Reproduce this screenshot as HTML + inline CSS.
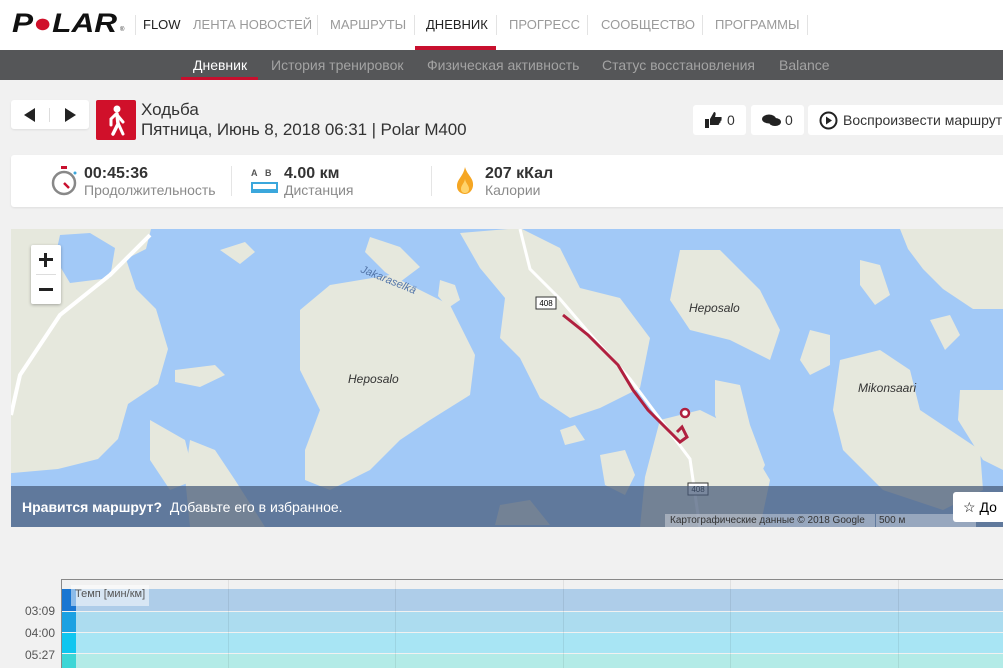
<!DOCTYPE html>
<html><head><meta charset="utf-8"><style>
*{margin:0;padding:0;box-sizing:border-box}
body{width:1003px;height:668px;overflow:hidden;background:#f1f1f1;font-family:"Liberation Sans",sans-serif;position:relative}
.abs{position:absolute}
.top{left:0;top:0;width:1003px;height:50px;background:#fff}
.nav a{position:absolute;top:17px;font-size:13px;color:#9a9a9a;text-decoration:none}
.sep{position:absolute;top:15px;width:1px;height:20px;background:#e3e3e3}
.sub{left:0;top:50px;width:1003px;height:30px;background:#555658}
.sub span{position:absolute;top:7px;font-size:14px;color:#a3a3a3}
.card{background:#fff;border-radius:3px;box-shadow:0 1px 2px rgba(0,0,0,.08)}
.btn{position:absolute;top:105px;height:30px;background:#fff;border-radius:3px;font-size:14px;color:#333;line-height:30px}
.lbl{font-size:14px;color:#8a8a8a}
.val{font-size:16px;font-weight:bold;color:#333}
</style></head><body>
<div class="abs top">
 <div class="abs" style="left:12px;top:8px;font-size:27px;font-weight:900;font-style:italic;letter-spacing:0;color:#111;transform:scaleX(1.17);transform-origin:left">P<span style="color:#d0102a">●</span>LAR</div>
 <div class="abs" style="left:120px;top:27px;font-size:6px;color:#333">®</div>
 <div class="sep" style="left:135px"></div>
 <div class="nav">
  <a style="left:143px;color:#222">FLOW</a>
  <a style="left:193px">ЛЕНТА НОВОСТЕЙ</a>
  <div class="sep" style="left:317px"></div>
  <a style="left:330px">МАРШРУТЫ</a>
  <div class="sep" style="left:414px"></div>
  <a style="left:426px;color:#222">ДНЕВНИК</a>
  <div class="sep" style="left:496px"></div>
  <a style="left:509px">ПРОГРЕСС</a>
  <div class="sep" style="left:587px"></div>
  <a style="left:601px">СООБЩЕСТВО</a>
  <div class="sep" style="left:702px"></div>
  <a style="left:715px">ПРОГРАММЫ</a>
  <div class="sep" style="left:807px"></div>
 </div>
 <div class="abs" style="left:415px;top:46px;width:81px;height:4px;background:#c8102e"></div>
</div>
<div class="abs sub">
 <span style="left:193px;color:#fff">Дневник</span>
 <div class="abs" style="left:181px;top:27px;width:77px;height:3px;background:#c8102e"></div>
 <span style="left:271px">История тренировок</span>
 <span style="left:427px">Физическая активность</span>
 <span style="left:602px">Статус восстановления</span>
 <span style="left:779px">Balance</span>
</div>
<div class="abs card" style="left:11px;top:100px;width:78px;height:29px"></div>
<div class="abs" style="left:24px;top:108px;width:0;height:0;border-top:7px solid transparent;border-bottom:7px solid transparent;border-right:11px solid #222"></div>
<div class="abs" style="left:49px;top:108px;width:1px;height:14px;background:#ddd"></div>
<div class="abs" style="left:65px;top:108px;width:0;height:0;border-top:7px solid transparent;border-bottom:7px solid transparent;border-left:11px solid #222"></div>
<div class="abs" style="left:96px;top:100px;width:40px;height:40px;background:#d0102a;border-radius:2px">
 <svg width="40" height="40" viewBox="0 0 40 40"><circle cx="21" cy="9" r="3.5" fill="#fff"/><path d="M20 14l-5 5v6" stroke="#fff" stroke-width="3" fill="none" stroke-linecap="round"/><path d="M21 14l1 10-5 10" stroke="#fff" stroke-width="3.5" fill="none" stroke-linecap="round"/><path d="M22 23l5 11M22 16l5 6" stroke="#fff" stroke-width="3" fill="none" stroke-linecap="round"/></svg>
</div>
<div class="abs" style="left:141px;top:100px;font-size:17px;color:#333">Ходьба</div>
<div class="abs" style="left:141px;top:120px;font-size:17px;color:#333;letter-spacing:-0.1px">Пятница, Июнь 8, 2018 06:31 | Polar M400</div>
<div class="btn" style="left:693px;width:53px"><svg class="abs" style="left:11px;top:7px" width="18" height="16" viewBox="0 0 18 16"><path d="M1 7h4v9H1zM6 7l4-7c2 0 2 2 1 5h6c1 0 1 2 0 2 1 0 1 2-1 2 1 0 1 2-1 2 1 0 0 2-1 2H6z" fill="#222"/></svg><span class="abs" style="left:34px">0</span></div>
<div class="btn" style="left:751px;width:53px"><svg class="abs" style="left:11px;top:9px" width="20" height="13" viewBox="0 0 20 13"><ellipse cx="7" cy="5" rx="7" ry="4.5" fill="#222"/><ellipse cx="13" cy="8" rx="6" ry="4" fill="#222"/></svg><span class="abs" style="left:34px">0</span></div>
<div class="btn" style="left:808px;width:210px"><svg class="abs" style="left:11px;top:6px" width="19" height="19" viewBox="0 0 19 19"><circle cx="9.5" cy="9.5" r="8" stroke="#222" stroke-width="2" fill="none"/><path d="M7 5.5l6 4-6 4z" fill="#222"/></svg><span class="abs" style="left:35px">Воспроизвести маршрут</span></div>
<div class="abs card" style="left:11px;top:155px;width:1000px;height:52px"></div>
<svg class="abs" style="left:50px;top:165px" width="30" height="32" viewBox="0 0 30 32"><rect x="11" y="1" width="6" height="3" fill="#c8102e"/><circle cx="14" cy="18" r="11" stroke="#888" stroke-width="2.5" fill="#fff"/><path d="M14 18l5 5" stroke="#c8102e" stroke-width="2.5"/><circle cx="25" cy="8" r="1.5" fill="#3ba7dc"/></svg>
<div class="abs val" style="left:84px;top:165px">00:45:36</div>
<div class="abs lbl" style="left:84px;top:182px">Продолжительность</div>
<div class="abs" style="left:231px;top:166px;width:1px;height:30px;background:#e5e5e5"></div>
<div class="abs" style="left:251px;top:168px;font-size:9px;font-weight:bold;color:#555">A&nbsp;&nbsp;&nbsp;B</div>
<div class="abs" style="left:251px;top:182px;width:27px;height:11px;background:#3ba7dc"><div style="margin:2px 2px;height:5px;background:#fff"></div></div>
<div class="abs val" style="left:284px;top:165px">4.00 км</div>
<div class="abs lbl" style="left:284px;top:182px">Дистанция</div>
<div class="abs" style="left:431px;top:166px;width:1px;height:30px;background:#e5e5e5"></div>
<svg class="abs" style="left:455px;top:167px" width="20" height="28" viewBox="0 0 20 28"><path d="M10 0C12 8 19 11 18 19c-1 6-5 8-8 8s-8-2-8-8C2 12 8 10 10 0z" fill="#f5a623"/><path d="M10 12c1 5 4 6 4 10 0 3-2 4-4 4s-4-1-4-4c0-4 3-5 4-10z" fill="#ffd36b"/></svg>
<div class="abs val" style="left:485px;top:165px">207 кКал</div>
<div class="abs lbl" style="left:485px;top:182px">Калории</div>
<svg class="abs" style="left:11px;top:229px" width="992" height="298" viewBox="11 229 992 298">
<rect x="11" y="229" width="992" height="298" fill="#a2c9f7"/>
<g fill="#e6e8dd">
<path d="M11 229h140l-5 20-20 10 10 30 20 20 12 40 -10 35-30 20-10 35-20 20-40 10-57 5z"/>
<path d="M60 235l30-2 25 15-5 30-40 5-15-25z" fill="#a2c9f7"/>
<path d="M175 370l40-5 10 10-25 12-25-5z"/>
<path d="M150 420l35 20 10 40-25 10-20-30z"/>
<path d="M190 440l25 10 20 30 30 47h-75l-5-50z"/>
<path d="M220 250l25-8 10 10-15 12z"/>
<path d="M300 310l30-25 60-10 60 30 25 50-5 40-40 25-30 20-30 30-40 20-25-10 0-30 15-40-20-40z"/>
<path d="M370 237l30 10 20 20-20 15-15-10-20-20z"/>
<path d="M440 280l15 5 5 15-12 8-10-12z"/>
<path d="M460 233l60-5 40 20 20 40 40 10 30 40-10 50-40 20-30 10-30-20-20-40-20-20 5-40-25-30z"/>
<path d="M660 420l40-10 40 20 30 50-10 47h-120l5-50z"/>
<path d="M680 250l40 0 40 40 20 40-10 30-40-20-40-10-20-30z"/>
<path d="M715 380l25 5 10 40 15 40-10 20-25-30-15-40z"/>
<path d="M840 360l40-10 30 20 10 40 30 20 30 20 3 40-40 20-60-20-40-40-10-40z"/>
<path d="M900 229l103 0 0 80-30 0-30-20-20-20-15-20z"/>
<path d="M930 320l20-5 10 20-15 15z"/>
<path d="M810 330l20 5 0 30-20 10-10-15z"/>
<path d="M860 260l20 5 10 30-15 10-15-20z"/>
<path d="M960 390l43 0 0 80-20-10-25-40z"/>
<path d="M560 430l15-5 10 15-20 5z"/>
<path d="M600 455l25-5 10 25-10 20-20-10z"/>
<path d="M500 505l30-5 20 25h-55z"/>
</g>
<path d="M150 235l-40 40-50 40-40 60-9 40" stroke="#fff" stroke-width="4" fill="none"/>
<path d="M520 229l10 40 30 30 30 35 40 45 30 40 30 40 10 70" stroke="#fff" stroke-width="3" fill="none"/>
<path d="M563 315l25 20 30 30 15 25 15 20 20 20 12 12 7-5-5-10-5 5" stroke="#b0203f" stroke-width="3" fill="none"/>
<circle cx="685" cy="413" r="4" fill="#fff" stroke="#b0203f" stroke-width="2.5"/>
<rect x="536" y="297" width="20" height="12" fill="#fff" stroke="#333"/>
<text x="546" y="306" font-size="8" text-anchor="middle" font-family="Liberation Sans">408</text>
<rect x="688" y="483" width="20" height="12" fill="#fff" stroke="#333"/>
<text x="698" y="492" font-size="8" text-anchor="middle" font-family="Liberation Sans">408</text>
<g font-family="Liberation Sans" font-style="italic" font-size="12" fill="#333">
<text x="348" y="383">Heposalo</text><text x="689" y="312">Heposalo</text><text x="858" y="392">Mikonsaari</text>
<text x="360" y="272" fill="#5577aa" font-size="11" transform="rotate(22 360 272)">Jakaraselkä</text>
</g>
</svg>
<div class="abs" style="left:31px;top:245px;width:30px;height:59px;background:#fff;border-radius:2px;box-shadow:0 1px 3px rgba(0,0,0,.3)">
 <div class="abs" style="left:8px;top:13px;width:14px;height:3px;background:#222"></div>
 <div class="abs" style="left:13px;top:8px;width:3px;height:14px;background:#222"></div>
 <div class="abs" style="left:5px;top:29px;width:20px;height:1px;background:#ddd"></div>
 <div class="abs" style="left:8px;top:43px;width:14px;height:3px;background:#222"></div>
</div>
<div class="abs" style="left:11px;top:486px;width:992px;height:41px;background:rgba(70,90,120,.72)"></div>
<div class="abs" style="left:22px;top:499px;font-size:14px;color:#fff"><b>Нравится маршрут?</b>&nbsp; Добавьте его в избранное.</div>
<div class="abs" style="left:665px;top:514px;width:210px;height:13px;background:rgba(255,255,255,.35);font-size:10px;color:#333;padding-left:5px;line-height:13px">Картографические данные © 2018 Google</div>
<div class="abs" style="left:876px;top:514px;width:100px;height:13px;background:rgba(255,255,255,.35);font-size:10px;color:#333;padding-left:3px;line-height:13px">500 м</div>
<div class="abs" style="left:953px;top:492px;width:60px;height:30px;background:#fff;border-radius:3px;font-size:14px;line-height:30px;padding-left:10px">☆ До</div>
<div class="abs" style="left:61px;top:579px;width:942px;height:89px;border-top:1px solid #888;border-left:1px solid #888"></div>
<div class="abs" style="left:62px;top:589px;width:941px;height:22px;background:#aecde9"></div>
<div class="abs" style="left:62px;top:612px;width:941px;height:20px;background:#acdcef"></div>
<div class="abs" style="left:62px;top:633px;width:941px;height:20px;background:#a8e5f4"></div>
<div class="abs" style="left:62px;top:654px;width:941px;height:14px;background:#b3ebe7"></div>
<div class="abs" style="left:62px;top:589px;width:14px;height:22px;background:#1976d2"></div>
<div class="abs" style="left:62px;top:612px;width:14px;height:20px;background:#1ba1e2"></div>
<div class="abs" style="left:62px;top:633px;width:14px;height:20px;background:#0fc6f0"></div>
<div class="abs" style="left:62px;top:654px;width:14px;height:14px;background:#3cd6d6"></div>
<div class="abs" style="left:228px;top:580px;width:1px;height:88px;background:rgba(0,0,0,.07)"></div>
<div class="abs" style="left:395px;top:580px;width:1px;height:88px;background:rgba(0,0,0,.07)"></div>
<div class="abs" style="left:563px;top:580px;width:1px;height:88px;background:rgba(0,0,0,.07)"></div>
<div class="abs" style="left:730px;top:580px;width:1px;height:88px;background:rgba(0,0,0,.07)"></div>
<div class="abs" style="left:898px;top:580px;width:1px;height:88px;background:rgba(0,0,0,.07)"></div>
<div class="abs" style="left:71px;top:585px;height:21px;padding:3px 4px;background:rgba(255,255,255,.5);font-size:11px;color:#555">Темп [мин/км]</div>
<div class="abs" style="left:25px;top:604px;font-size:12px;color:#555">03:09</div>
<div class="abs" style="left:25px;top:626px;font-size:12px;color:#555">04:00</div>
<div class="abs" style="left:25px;top:648px;font-size:12px;color:#555">05:27</div>
</body></html>
